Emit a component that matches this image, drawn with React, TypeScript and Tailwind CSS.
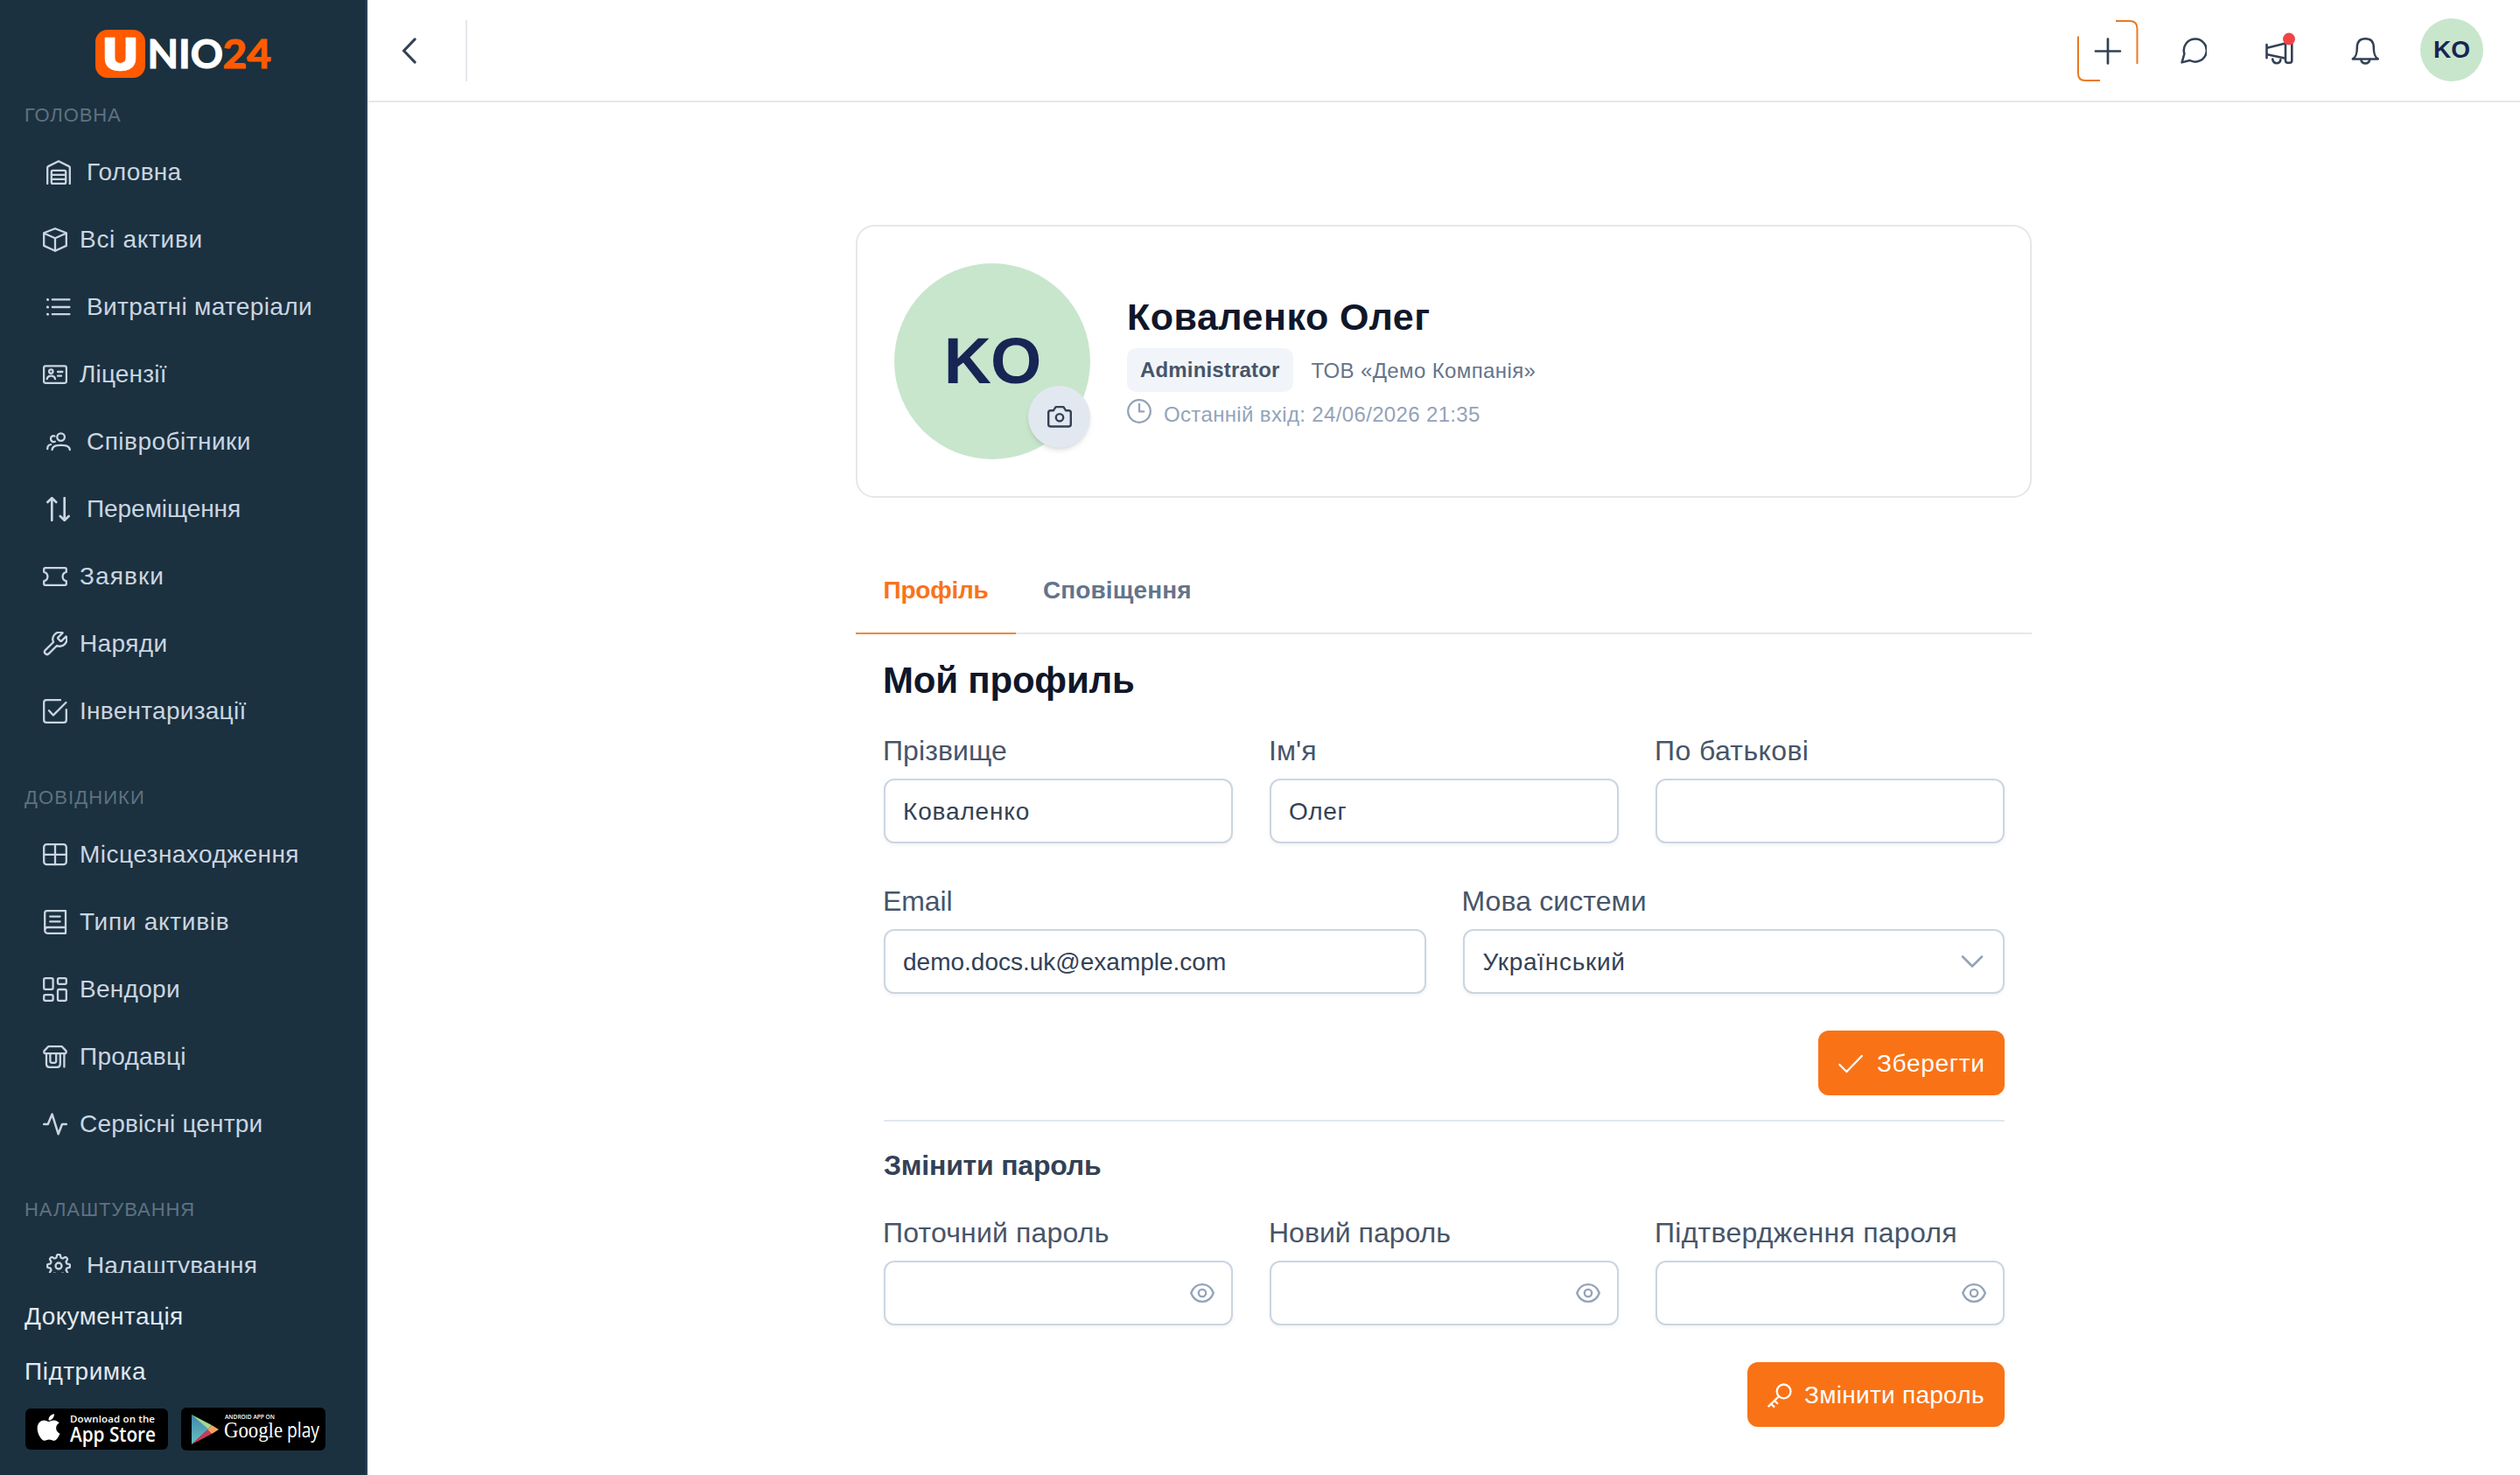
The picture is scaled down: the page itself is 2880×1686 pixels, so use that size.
import type { ReactNode } from "react";
import { FaApple } from "react-icons/fa";

function Icon({ children, size = 28, className = "", stroke = 2.3 }: { children: ReactNode; size?: number; className?: string; stroke?: number }) {
  return (
    <svg
      width={size}
      height={size}
      viewBox={`0 0 ${size} ${size}`}
      fill="none"
      stroke="currentColor"
      strokeWidth={stroke}
      strokeLinecap="round"
      strokeLinejoin="round"
      className={`shrink-0 ${className}`}
    >
      {children}
    </svg>
  );
}

const gearPath = (() => {
  const pts: string[] = [];
  for (let i = 0; i < 160; i++) {
    const a = (i / 160) * Math.PI * 2;
    const wave = Math.tanh(2.2 * Math.cos(8 * a)) / Math.tanh(2.2);
    const r = 11.3 + 1.7 * wave;
    pts.push(`${(14 + r * Math.sin(a)).toFixed(2)} ${(14 - r * Math.cos(a)).toFixed(2)}`);
  }
  return `M${pts.join("L")}Z`;
})();

const icons: Record<string, ReactNode> = {
  warehouse: (
    <>
      <path d="M1.2 27V8.6q0-1 1-1.5L14 1.2l11.8 5.9q1 .5 1 1.5V27" />
      <rect x="5.8" y="11.8" width="16.4" height="15.2" rx="1.6" />
      <path d="M6 16.8h16M6 21.8h16" />
    </>
  ),
  box: (
    <>
      <path d="M14 1.2 26.8 6.3v14.6L14 26.8 1.2 20.9V6.3Z" />
      <path d="M1.6 6.8 14 12.2l12.4-5.4M14 12.2v14.4" />
    </>
  ),
  list: (
    <>
      <path d="M6.8 5.4h19.6M6.8 14h19.6M6.8 22.2h19.6" />
      <path d="M1.4 5.4h.2M1.4 14h.2M1.4 22.2h.2" strokeWidth="3" />
    </>
  ),
  idcard: (
    <>
      <rect x="1.1" y="4.4" width="25.8" height="19.4" rx="2" />
      <circle cx="9.3" cy="10.6" r="2.2" />
      <path d="M4.8 19.2c.3-2.6 2.2-3.6 4.6-3.6s4.3 1 4.6 3.6M17 11h5.4M17 15.7h4" />
    </>
  ),
  users: (
    <>
      <circle cx="16.6" cy="8.6" r="4.3" />
      <path d="M6.6 23.2c0-4 3.8-5.4 10-5.4s10.2 1.4 10.2 5.4" />
      <path d="M9.4 7.6C7.2 6.4 5 8.2 5 10.6s2.2 4.2 4.8 3.2M1.2 22.2c0-3.4 1-4.9 3.8-5.1" />
    </>
  ),
  arrows: (
    <path d="M6.3 26.8V1.4M1.4 6 6.3 1.2 11.2 6M20.7 1.2v25.4M15.8 22l4.9 4.8 4.9-4.8" strokeWidth="2.7" />
  ),
  ticket: (
    <path d="M2.8 4.2h22.4q1.6 0 1.6 1.6V8.8c-2.7.6-4.2 2.6-4.2 5.2s1.5 4.6 4.2 5.2v3q0 1.6-1.6 1.6H2.8q-1.6 0-1.6-1.6v-3C3.9 18.6 5.4 16.6 5.4 14S3.9 9.4 1.2 8.8v-3q0-1.6 1.6-1.6Z" />
  ),
  wrench: (
    <g transform="translate(-2 -2) scale(1.333)">
      <path
        strokeWidth="1.75"
        d="M14.7 6.3a1 1 0 0 0 0 1.4l1.6 1.6a1 1 0 0 0 1.4 0l3.77-3.77a6 6 0 0 1-7.94 7.94l-6.91 6.91a2.12 2.12 0 0 1-3-3l6.91-6.91a6 6 0 0 1 7.94-7.94l-3.76 3.76z"
      />
    </g>
  ),
  check: (
    <>
      <path d="M20 1.2H4q-2.8 0-2.8 2.8v20q0 2.8 2.8 2.8h20q2.8 0 2.8-2.8V12.2" />
      <path d="M7 13.2 11.8 18.6 26.4 4" />
    </>
  ),
  table: (
    <>
      <rect x="1.2" y="2.2" width="25.6" height="23" rx="3.2" />
      <path d="M14 2.2v23M1.2 13.8h25.6" />
    </>
  ),
  book: (
    <>
      <path d="M26 1.2H4.8q-2.6 0-2.6 2.6v19q0 4 3.2 4H26M26 1.2v25.6M2.4 23c0-2 1.2-3 3-3H26" />
      <path d="M8.2 7.6h11.4M8.2 13.4h11.4" />
    </>
  ),
  blocks: (
    <>
      <rect x="1.2" y="1.2" width="10.4" height="12.6" rx="1.6" />
      <rect x="17" y="1.2" width="9.8" height="6.6" rx="1.6" />
      <rect x="1.2" y="20.2" width="10.4" height="6.6" rx="1.6" />
      <rect x="17" y="14" width="9.8" height="12.8" rx="1.6" />
    </>
  ),
  shop: (
    <>
      <path d="M6.2 2.2h15.6L26.6 7.4q.6 2.8-2 2.8H3.4q-2.6 0-2-2.8Z" />
      <path d="M4 10.4v11.8q0 3.6 3.4 3.6h9q3.4 0 3.4-3.6V10.4M24.4 10.4V25.6" />
      <path d="M8.4 10.6v8.2q0 2 2 2h2.8q2 0 2-2v-8.2" />
    </>
  ),
  activity: <path d="M1.2 14h4.6L10.6 2.6l7 22.6L22 14h4.8" strokeWidth="2.5" />,
  gear: (
    <>
      <path d={gearPath} />
      <circle cx="14" cy="14" r="3.5" />
    </>
  ),
};

type Item = { icon: string; label: string; inset?: boolean; track?: string };

const mainItems: Item[] = [
  { icon: "warehouse", label: "Головна", inset: true, track: "tracking-[0.3px]" },
  { icon: "box", label: "Всі активи", track: "tracking-[0.7px]" },
  { icon: "list", label: "Витратні матеріали", inset: true, track: "tracking-[0.35px]" },
  { icon: "idcard", label: "Ліцензії", track: "tracking-[0.18px]" },
  { icon: "users", label: "Співробітники", inset: true, track: "tracking-[0.48px]" },
  { icon: "arrows", label: "Переміщення", inset: true, track: "tracking-[-0.05px]" },
  { icon: "ticket", label: "Заявки", track: "tracking-[1.1px]" },
  { icon: "wrench", label: "Наряди", track: "tracking-[0.4px]" },
  { icon: "check", label: "Інвентаризації", track: "tracking-[0.28px]" },
];

const directoryItems: Item[] = [
  { icon: "table", label: "Місцезнаходження", track: "tracking-[0.47px]" },
  { icon: "book", label: "Типи активів", track: "tracking-[0.72px]" },
  { icon: "blocks", label: "Вендори", track: "tracking-[0.3px]" },
  { icon: "shop", label: "Продавці", track: "tracking-[0.25px]" },
  { icon: "activity", label: "Сервісні центри", track: "tracking-[0.17px]" },
];

function NavItem({ icon, label, inset, track }: Item) {
  return (
    <a className={`flex h-[77px] shrink-0 items-center text-[28px] text-[#cbd5e1] ${inset ? "gap-[18px] pl-[53px]" : "gap-[14px] pl-[49px]"}`}>
      <Icon>{icons[icon]}</Icon>
      <span className={`whitespace-nowrap ${track ?? ""}`}>{label}</span>
    </a>
  );
}

function NavLabel({ children, className }: { children: ReactNode; className: string }) {
  return <div className={`shrink-0 pl-7 text-[22px] leading-[40px] text-[#5f7183] ${className}`}>{children}</div>;
}

function Logo() {
  return (
    <div className="flex h-[112px] shrink-0 items-start pt-[34px] pl-[109px]">
      <svg width="216" height="60" viewBox="0 0 216 60" className="overflow-visible">
        <rect width="57" height="55" rx="14" fill="#ff5a00" />
        <text x="8.5" y="46" fill="#fff" stroke="#fff" strokeWidth="0.6" fontFamily="Inter" fontWeight="900" fontSize="51" textLength="40" lengthAdjust="spacingAndGlyphs">U</text>
        <text x="59.5" y="44" fill="#fff" stroke="#fff" strokeWidth="1.2" fontFamily="Lato" fontWeight="700" fontSize="45.5" textLength="86.5" lengthAdjust="spacingAndGlyphs">NIO</text>
        <text x="145.5" y="44" fill="#ff5a00" stroke="#ff5a00" strokeWidth="1.2" fontFamily="Lato" fontWeight="700" fontSize="45.5" textLength="55.5" lengthAdjust="spacingAndGlyphs">24</text>
      </svg>
    </div>
  );
}

function AppStoreBadge() {
  return (
    <div className="flex h-[47px] w-[163px] items-center rounded-md bg-black pl-[13px]">
      <FaApple className="-mt-1 h-[35px] w-[27px] shrink-0 text-white" />
      <svg width="108" height="47" viewBox="0 0 108 47" className="ml-[11px]" fill="#fff" fontFamily="Open Sans">
        <text x="0" y="16" fontSize="11.5" fontWeight="600" textLength="97">Download on the</text>
        <text x="0" y="37.5" fontSize="22.5" fontWeight="600" textLength="98" lengthAdjust="spacingAndGlyphs">App Store</text>
      </svg>
    </div>
  );
}

function GooglePlayBadge() {
  return (
    <div className="flex h-[49px] w-[165px] items-center rounded-md bg-black pl-3">
      <svg width="31" height="36" viewBox="0 0 31 36" className="shrink-0">
        <defs>
          <linearGradient id="gp" x1="0" y1="0" x2="0" y2="1">
            <stop offset="0" stopColor="#3f86ad" />
            <stop offset="1" stopColor="#6cc0bd" />
          </linearGradient>
        </defs>
        <path d="M0 1v34l20-18Z" fill="url(#gp)" />
        <path d="M0 1 23 13l-4 4.5Z" fill="#a5d694" />
        <path d="M0 35 23 23l-4-5.5Z" fill="#c83b5b" />
        <path d="M23 13 31 18l-8 5-4.5-5Z" fill="#f5a35c" />
      </svg>
      <svg width="114" height="49" viewBox="0 0 114 49" className="ml-[6px] shrink-0 overflow-visible" fill="#fff">
        <text x="1" y="13" fontSize="7.5" fontFamily="Open Sans" fontWeight="600" textLength="57" lengthAdjust="spacingAndGlyphs">ANDROID APP ON</text>
        <text x="0" y="33.5" fontSize="25" fontFamily="Liberation Serif" textLength="67" lengthAdjust="spacingAndGlyphs">Google</text>
        <text x="72" y="33.5" fontSize="24" fontFamily="Open Sans" textLength="37" lengthAdjust="spacingAndGlyphs">play</text>
      </svg>
    </div>
  );
}

function Sidebar() {
  return (
    <aside className="flex h-full w-[420px] shrink-0 flex-col border-r-2 border-[#2c4058] bg-[#1b313f]">
      <div className="flex h-[1455px] shrink-0 flex-col overflow-hidden">
        <Logo />
        <NavLabel className="h-[46px] tracking-[0.89px]">ГОЛОВНА</NavLabel>
        {mainItems.map((i) => <NavItem key={i.label} {...i} />)}
        <NavLabel className="mt-[41px] h-[46px] tracking-[1.1px]">ДОВІДНИКИ</NavLabel>
        {directoryItems.map((i) => <NavItem key={i.label} {...i} />)}
        <NavLabel className="mt-[40px] h-[45px] tracking-[0.93px]">НАЛАШТУВАННЯ</NavLabel>
        <NavItem icon="gear" label="Налаштування" inset track="tracking-[0.12px]" />
      </div>
      <div className="flex flex-col pt-[18px] pl-7 text-[28px] leading-[63px] text-[#e2e8f0]">
        <a className="tracking-[0.39px]">Документація</a>
        <a className="tracking-[0.52px]">Підтримка</a>
        <div className="mt-2.5 flex items-center gap-[15px] pl-px leading-none">
          <AppStoreBadge />
          <GooglePlayBadge />
        </div>
      </div>
    </aside>
  );
}

function HeaderCell({ children }: { children: ReactNode }) {
  return <button className="flex h-[70px] w-[70px] items-center justify-center text-[#334155]">{children}</button>;
}

function Header() {
  return (
    <header className="flex h-[117px] shrink-0 items-center border-b-2 border-[#e5e7eb] pr-[42px] pl-[35px]">
      <Icon size={30} stroke={3.2} className="text-[#334155]">
        <path d="M19 2 6.5 15 19 28" />
      </Icon>
      <div className="ml-[47px] h-[70px] w-0.5 bg-[#e5e7eb]" />
      <div className="ml-auto flex items-center gap-7">
        <HeaderCell>
          <Icon size={70} stroke={2}>
            <path d="M44 1h16q8.5 0 8.5 8.5V50M1 18.5V61q0 8 8 8h17" stroke="#ea7a1f" strokeLinecap="butt" />
            <path d="M35 21.500v28M21 35.500h28" strokeWidth="2.7" />
          </Icon>
        </HeaderCell>
        <HeaderCell>
          <Icon size={30} stroke={2.5}>
            <path d="M4.4 18.5A13 13 0 1 1 10.6 26L1.6 28.4Z" />
          </Icon>
        </HeaderCell>
        <HeaderCell>
          <Icon size={32} stroke={2.6} className="overflow-visible">
            <path d="M1.5 9v15.200M2 12.700 22 7.800M2 20.300l20 4.300" />
            <rect x="23" y="5.5" width="7.3" height="24.2" rx="2.4" />
            <path d="M8.200 25.500c.4 3 2.300 4.700 4.600 4.700s4.200-1.500 4.600-4" />
            <circle cx="27" cy="2.6" r="7" fill="#ef4444" stroke="none" />
          </Icon>
        </HeaderCell>
        <HeaderCell>
          <Icon size={32} stroke={2.5} className="overflow-visible">
            <path d="M1.800 25.400C5.500 23 6.800 20 6.800 12.500c0-6.300 3.200-10.200 9.500-10.200s9.500 3.900 9.500 10.200c0 7.500 1.300 10.500 5 12.900Z" />
            <path d="M11.300 26c.4 2.800 2.200 4.400 5 4.400s4.600-1.600 5-4.400" />
          </Icon>
        </HeaderCell>
        <div className="-mt-px flex h-[72px] w-[72px] items-center justify-center rounded-full bg-[#c8e6cc] text-[28px] font-bold text-[#172554]">KO</div>
      </div>
    </header>
  );
}

function ProfileCard() {
  return (
    <section className="flex h-[312px] gap-[42px] rounded-[21px] border-2 border-[#e5e7eb] px-[42px] pt-[42px]">
      <div className="relative flex h-56 w-56 shrink-0 items-center justify-center rounded-full bg-[#c8e6cc] pb-0.5 text-[75px] font-bold tracking-[-1px] text-[#172554]">
        KO
        <div className="absolute top-[140px] right-0 flex h-[71px] w-[71px] items-center justify-center rounded-full bg-[#e2e8f0] text-[#334155] shadow-md">
          <Icon stroke={2.4}>
            <path d="M3.6 6.300h3.200L9.600 2.100h8.800l2.800 4.200h3.200q2.400 0 2.400 2.400v13.200q0 2.600-2.600 2.600H3.800q-2.600 0-2.600-2.600V8.700q0-2.400 2.400-2.400Z" />
            <circle cx="14" cy="14.3" r="4.2" />
          </Icon>
        </div>
      </div>
      <div className="flex flex-col items-start pt-8">
        <h1 className="h-[58px] text-[43px] leading-[59px] font-bold tracking-[0.5px] text-[#0f172a]">Коваленко Олег</h1>
        <div className="mt-[7px] flex items-center gap-[21px]">
          <span className="flex h-[50px] items-center rounded-[10px] bg-[#f1f5f9] px-[15px] pb-px text-[24px] font-bold tracking-[0.17px] text-[#475569]">Administrator</span>
          <span className="pt-px text-[24px] tracking-[0.38px] text-[#64748b]">ТОВ «Демо Компанія»</span>
        </div>
        <div className="mt-1 flex h-9 items-center gap-[14px] text-[#94a3b8]">
          <Icon>
            <circle cx="14" cy="14" r="12.8" />
            <path d="M14 6v8.400h5.200" />
          </Icon>
          <span className="pt-[7px] text-[24px] leading-7 tracking-[0.35px]">Останній вхід: 24/06/2026 21:35</span>
        </div>
      </div>
    </section>
  );
}

function Tabs() {
  return (
    <div className="mt-[54px] flex h-[102px] border-b-2 border-[#e5e7eb] text-[28px] font-bold">
      <button className="-mb-0.5 flex w-[183px] items-center justify-center border-b-2 border-[#ea8a3a] pt-[3px] tracking-[-0.23px] text-[#f97316]">Профіль</button>
      <button className="flex items-center px-[31px] pt-[3px] tracking-[0.1px] text-[#64748b]">Сповіщення</button>
    </div>
  );
}

function Field({ label, track, children }: { label: string; track: string; children?: ReactNode }) {
  return (
    <div className="flex flex-1 flex-col">
      <label className={`-ml-px h-[38px] text-[32px] leading-[38px] whitespace-nowrap text-[#475569] ${track}`}>{label}</label>
      <div className="mt-[13px] flex h-[74px] items-center rounded-xl border-2 border-[#cbd5e1] bg-white px-5 text-[28px] text-[#334155] shadow-[0_2px_4px_rgba(18,18,23,0.05)]">
        {children}
      </div>
    </div>
  );
}

function Eye() {
  return (
    <Icon className="-mr-px ml-auto text-[#94a3b8]">
      <path d="M1.200 14C3.600 7.600 8.200 4.200 14 4.200S24.400 7.600 26.800 14C24.400 20.400 19.800 23.800 14 23.800S3.600 20.400 1.200 14Z" />
      <circle cx="14" cy="14" r="4.2" />
    </Icon>
  );
}

function Button({ icon, label, className }: { icon: ReactNode; label: string; className: string }) {
  return (
    <button className={`flex h-[74px] items-center rounded-xl bg-[#f97316] pl-[23px] text-[28px] text-white ${className}`}>
      <Icon>{icon}</Icon>
      <span>{label}</span>
    </button>
  );
}

function ProfileForm() {
  return (
    <div className="flex flex-col pr-[31px] pl-8">
      <h2 className="-ml-px mt-7 h-[58px] text-[42px] leading-[49px] font-bold tracking-[-0.21px] text-[#0f172a]">Мой профиль</h2>
      <div className="mt-7 flex gap-[42px]">
        <Field label="Прізвище" track="tracking-[0.1px]"><span className="pt-px tracking-[0.85px]">Коваленко</span></Field>
        <Field label="Ім'я" track="tracking-[0.1px]"><span className="pt-px tracking-[0.7px]">Олег</span></Field>
        <Field label="По батькові" track="tracking-[0.4px]" />
      </div>
      <div className="mt-[47px] flex gap-[42px]">
        <Field label="Email" track="tracking-[-0.1px]"><span className="pt-px">demo.docs.uk@example.com</span></Field>
        <Field label="Мова системи" track="tracking-[0.1px]">
          <span className="ml-px pt-px tracking-[0.72px]">Український</span>
          <Icon className="mr-px ml-auto text-[#94a3b8]" stroke={2.6}>
            <path d="M3 8.500 14 19.500 25 8.500" />
          </Icon>
        </Field>
      </div>
      <div className="mt-[42px] flex justify-end">
        <Button className="w-[213px] gap-[16px] pt-px tracking-[0.7px]" icon={<path d="M1.400 15 9.400 23 26.800 5" />} label="Зберегти" />
      </div>
      <hr className="mt-7 border-t-2 border-[#e2e8f0]" />
      <h3 className="mt-[31px] h-[38px] text-[32px] leading-[38px] font-bold tracking-[-0.2px] text-[#334155]">Змінити пароль</h3>
      <div className="mt-[39px] flex gap-[42px]">
        <Field label="Поточний пароль" track="tracking-[0.18px]"><Eye /></Field>
        <Field label="Новий пароль" track="tracking-[0px]"><Eye /></Field>
        <Field label="Підтвердження пароля" track="tracking-[0.27px]"><Eye /></Field>
      </div>
      <div className="mt-[42px] flex justify-end">
        <Button
          className="w-[294px] gap-[14px] pt-px tracking-[0.28px]"
          icon={<><circle cx="18.6" cy="9.4" r="7.9" /><path d="M12.800 15.200 1.400 26.400M4.200 23.800l3.200 3M8 20l3.200 3" /></>}
          label="Змінити пароль"
        />
      </div>
    </div>
  );
}

export default function App() {
  return (
    <div className="flex h-[1686px] w-[2880px] overflow-hidden bg-white font-['Liberation_Sans',Arial,sans-serif]">
      <Sidebar />
      <div className="flex min-w-0 flex-1 flex-col">
        <Header />
        <main className="flex justify-center pt-[140px]">
          <div className="flex w-[1344px] flex-col">
            <ProfileCard />
            <Tabs />
            <ProfileForm />
          </div>
        </main>
      </div>
    </div>
  );
}
